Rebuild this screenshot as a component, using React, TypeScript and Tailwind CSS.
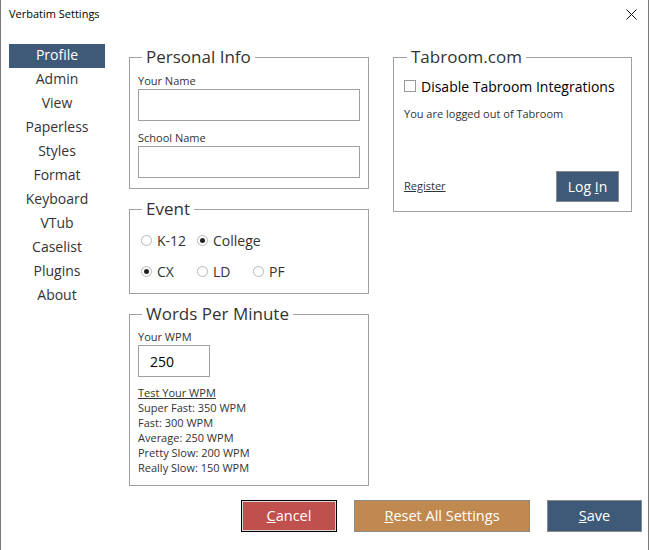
import React from "react";

const font = { fontFamily: '"Open Sans", "Noto Sans", sans-serif' };

function Radio({ checked, label, w }: { checked?: boolean; label: string; w: string }) {
  return (
    <div className={`flex items-center ${w}`}>
      <span className="w-[11px] h-[11px] rounded-full border border-[#b8b8b8] bg-white flex items-center justify-center mr-[5px]">
        {checked && <span className="w-[5px] h-[5px] rounded-full bg-[#222]" />}
      </span>
      <span className="text-[14px] text-[#333]">{label}</span>
    </div>
  );
}

export default function App() {
  const nav = ["Profile", "Admin", "View", "Paperless", "Styles", "Format", "Keyboard", "VTub", "Caselist", "Plugins", "About"];
  return (
    <div style={font} className="w-[649px] h-[550px] bg-white border-l border-r border-[#7a7a7a] flex flex-col text-[#333]">
      <div className="h-[29px] flex items-center justify-between pl-[8px] pr-[11px]">
        <span className="text-[11px] text-black">Verbatim Settings</span>
        <svg width="11" height="11" viewBox="0 0 11 11">
          <path d="M0.5 0.5 L10.5 10.5 M10.5 0.5 L0.5 10.5" stroke="#111" strokeWidth="1" />
        </svg>
      </div>
      <div className="flex mt-[16px] h-[451px]">
        <div className="w-[96px] ml-[8px] flex flex-col -mt-[1px]">
          {nav.map((n, i) => (
            <div
              key={n}
              className={`h-[24px] flex items-center justify-center text-[14px] leading-[18px] pb-[3px] ${i === 0 ? "bg-[#3f5a78] text-white" : "text-[#333]"}`}
            >
              {n}
            </div>
          ))}
        </div>
        <div className="ml-[24px] w-[240px] flex flex-col gap-[8px]">
          <fieldset className="border border-[#a0a0a0] h-[144px] px-[8px]">
            <legend className="ml-[4px] px-[4px] text-[17px] leading-[24px] text-[#333]">Personal Info</legend>
            <div className="text-[11px] leading-[14px] mt-[5px]">Your Name</div>
            <div className="h-[32px] border border-[#a0a0a0] mt-[1px]" />
            <div className="text-[11px] leading-[14px] mt-[10px]">School Name</div>
            <div className="h-[32px] border border-[#a0a0a0] mt-[1px]" />
          </fieldset>
          <fieldset className="border border-[#a0a0a0] h-[97px] px-[11px]">
            <legend className="ml-[1px] px-[4px] text-[17px] leading-[24px] text-[#333]">Event</legend>
            <div className="flex mt-[10px] h-[18px]">
              <Radio label="K-12" w="w-[56px]" />
              <Radio label="College" checked w="w-[80px]" />
            </div>
            <div className="flex mt-[13px] h-[18px]">
              <Radio label="CX" checked w="w-[56px]" />
              <Radio label="LD" w="w-[56px]" />
              <Radio label="PF" w="w-[56px]" />
            </div>
          </fieldset>
          <fieldset className="border border-[#a0a0a0] h-[184px] px-[8px]">
            <legend className="ml-[4px] px-[4px] text-[17px] leading-[24px] text-[#333]">Words Per Minute</legend>
            <div className="text-[11px] leading-[14px] mt-[4px]">Your WPM</div>
            <div className="w-[72px] h-[32px] border border-[#a0a0a0] mt-[1px] flex items-center pl-[11px] text-[14px] text-black">250</div>
            <div className="text-[11px] leading-[15px] mt-[8px] underline">Test Your WPM</div>
            <div className="text-[11px] leading-[15px]">Super Fast: 350 WPM</div>
            <div className="text-[11px] leading-[15px]">Fast: 300 WPM</div>
            <div className="text-[11px] leading-[15px]">Average: 250 WPM</div>
            <div className="text-[11px] leading-[15px]">Pretty Slow: 200 WPM</div>
            <div className="text-[11px] leading-[15px]">Really Slow: 150 WPM</div>
          </fieldset>
        </div>
        <div className="ml-[24px] w-[239px]">
          <fieldset className="border border-[#a0a0a0] h-[167px] px-[10px]">
            <legend className="ml-[3px] px-[4px] text-[17px] leading-[24px] text-[#333]">Tabroom.com</legend>
            <div className="flex items-center mt-[8px] h-[18px]">
              <span className="w-[12px] h-[12px] border border-[#999] bg-white mr-[5px]" />
              <span className="text-[14px] text-black">Disable Tabroom Integrations</span>
            </div>
            <div className="text-[11px] leading-[14px] mt-[12px]">You are logged out of Tabroom</div>
            <div className="flex items-end justify-between mt-[50px]">
              <span className="text-[11px] underline mb-[8px]">Register</span>
              <div className="w-[63px] h-[31px] bg-[#3f5a78] border border-[#8a8a8a] text-white text-[14px] flex items-center justify-center mr-[2px]">
                <span>Log <span className="underline">I</span>n</span>
              </div>
            </div>
          </fieldset>
        </div>
      </div>
      <div className="flex pl-[240px] gap-[17px] mt-[4px]">
        <div className="w-[96px] h-[32px] bg-[#c0504d] border border-black text-white text-[14.5px] flex items-center justify-center shadow-[inset_0_0_0_1px_#d8d8d8]">
          <span><span className="underline">C</span>ancel</span>
        </div>
        <div className="w-[176px] h-[32px] bg-[#c0894f] border border-[#8a8a8a] text-white text-[14.5px] flex items-center justify-center">
          <span><span className="underline">R</span>eset All Settings</span>
        </div>
        <div className="w-[95px] h-[32px] bg-[#3f5a78] border border-[#8a8a8a] text-white text-[14.5px] flex items-center justify-center">
          <span><span className="underline">S</span>ave</span>
        </div>
      </div>
    </div>
  );
}
